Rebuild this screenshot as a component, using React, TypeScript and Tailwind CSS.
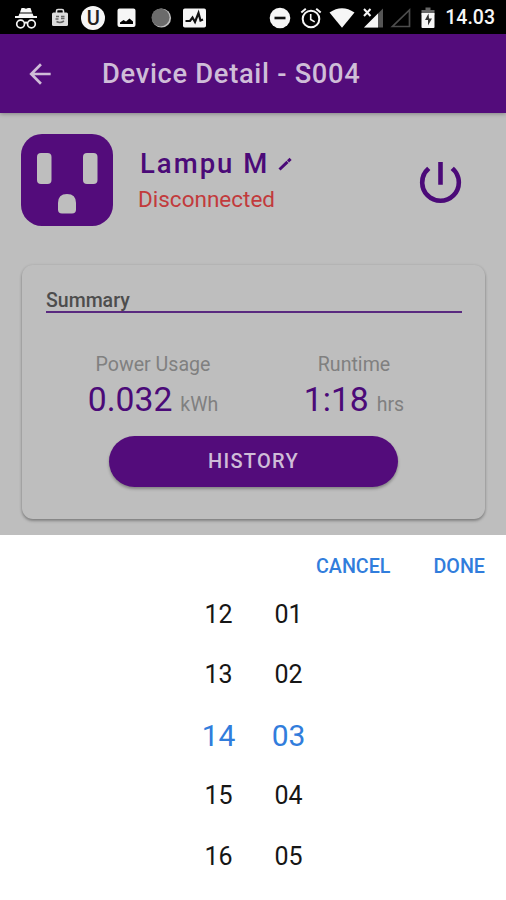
import type { ReactNode } from 'react';
import { MdArrowBack, MdPowerSettingsNew } from 'react-icons/md';

const hours = ['12', '13', '14', '15', '16'];
const minutes = ['01', '02', '03', '04', '05'];

function Glyph({ children, cell = 'w-[33.7px]' }: { children: ReactNode; cell?: string }) {
  return (
    <span className={`flex shrink-0 justify-center ${cell}`}>
      <svg viewBox="0 0 26 26" className="size-[26px] shrink-0" fill="#f6f6f6">
        {children}
      </svg>
    </span>
  );
}

function StatusBar() {
  return (
    <header className="flex h-[34px] items-center justify-between bg-black pt-px pr-[11px] pl-[9px]">
      <div className="flex">
        {/* Incognito */}
        <Glyph>
          <path d="M8.5 3h2.5l2 .8L15 3h2.5l1.5 4.5h-12zM6.5 8.5h13l1 2.5h3.5v2H2v-2h3.5z" />
          <g fill="none" stroke="#f6f6f6" strokeWidth="1.7">
            <circle cx="7.6" cy="19" r="3.9" />
            <circle cx="18.4" cy="19" r="3.9" />
            <path d="M11.3 18.2q1.7-1.4 3.4 0" />
          </g>
        </Glyph>
        {/* Shopping bag */}
        <Glyph>
          <path d="M9.5 8V6q0-1.5 1.5-1.5h4q1.5 0 1.5 1.5v2" fill="none" stroke="#ddd" strokeWidth="1.6" />
          <rect x="5" y="7.5" width="16" height="13.5" rx="1.5" fill="#dcdcdc" />
          <path d="M9 11.5h3M14 11.5h3.500M8.5 14h3M14 13.500h3.500M9.500 16.500q3.500 2 7.500-.5" fill="none" stroke="#666" strokeWidth="1.5" />
        </Glyph>
        <span className="flex w-[33.7px] items-center justify-center">
          <span className="flex size-6 items-center justify-center rounded-full bg-[#f6f6f6] text-[20px] leading-none font-medium text-[#222]">
            U
          </span>
        </span>
        {/* Picture */}
        <Glyph>
          <path
            fillRule="evenodd"
            d="M5.5 3.5h14a2 2 0 0 1 2 2v14.5a2 2 0 0 1-2 2h-14a2 2 0 0 1-2-2v-14.5a2 2 0 0 1 2-2zM6 19h13v-2.500l-3.500-3-3.500 3-2.500-1.500-3.500 2.500z"
          />
        </Glyph>
        {/* Moon */}
        <Glyph>
          <circle cx="13.5" cy="13" r="9.6" fill="#bdbdbd" />
          <circle cx="12.5" cy="12.5" r="9" fill="#6b6b6b" />
        </Glyph>
        {/* Activity */}
        <Glyph>
          <rect x="2" y="3.5" width="23" height="19" rx="1.8" />
          <path d="M4.500 16h4.500l2.500-3.500 2.500 4.500 3.500-9 2 7.500 2.500-1" fill="none" stroke="#111" strokeWidth="2.200" />
        </Glyph>
      </div>

      <div className="flex items-center">
        {/* Do not disturb */}
        <Glyph cell="w-[31px]">
          <circle cx="13" cy="13" r="10.3" />
          <path d="M7.5 11.7h11v2.6h-11z" fill="#111" />
        </Glyph>
        {/* Alarm */}
        <Glyph cell="w-[31px]">
          <g fill="none" stroke="#f6f6f6" strokeWidth="2">
            <circle cx="13" cy="14" r="8.3" />
            <path d="M3.3 7.5l4.5-3.8M22.7 7.5l-4.5-3.8" />
            <path d="M12.7 9v5.5l4 2.4" strokeWidth="1.6" />
          </g>
        </Glyph>
        {/* Wifi */}
        <Glyph cell="w-[32px]">
          <path d="M.5 7.5Q13-1 25.5 7.5L13 22.8z" />
        </Glyph>
        {/* Mobile signal without data */}
        <Glyph cell="w-[30px]">
          <path d="M23 3.5V22.5H4z" fill="#555" />
          <path d="M18 8.5V22.5H4z" />
          <path d="M4 4l6.500 7M10.5 4L4 11" stroke="#f6f6f6" strokeWidth="2" />
        </Glyph>
        {/* Second SIM */}
        <Glyph cell="w-[25px]">
          <path d="M21.5 5V21.5H4.500z" fill="none" stroke="#4d4d4d" strokeWidth="1.7" />
        </Glyph>
        {/* Battery */}
        <Glyph cell="w-[30px]">
          <path d="M10.5 2.5h5v2.5h4v5h-13v-5h4z" fill="#666" />
          <path d="M6.5 8h13v14q0 1-1 1h-11q-1 0-1-1z" />
          <path d="M13.500 8.500l-3.500 6.500h3v5.500l4-7h-3z" fill="#333" />
        </Glyph>
        <span className="ml-[2px] pt-px text-[19.5px] leading-none font-medium text-[#f6f6f6]">14.03</span>
      </div>
    </header>
  );
}

function Outlet() {
  return (
    <svg viewBox="0 0 92 92" className="size-[92px] shrink-0">
      <rect width="92" height="92" rx="21" fill="#530c7b" />
      <g fill="#bebebe">
        <rect x="16" y="19" width="14.5" height="31" rx="4" />
        <rect x="62" y="19" width="14.5" height="31" rx="4" />
        <path d="M37 69q0-9 9-9t9 9v6.5q0 4-4 4H41q-4 0-4-4z" />
      </g>
    </svg>
  );
}

function Stat({ label, value, unit, className }: { label: string; value: string; unit: string; className: string }) {
  return (
    <div className={`flex flex-col items-center ${className}`}>
      <div className="text-[19.6px] leading-6 text-[#808080]">{label}</div>
      <div className="flex items-baseline gap-2 pt-px leading-[44px]">
        <span className="text-[33.7px] text-[#4b0a78]">{value}</span>
        <span className="text-[19.5px] text-[#808080]">{unit}</span>
      </div>
    </div>
  );
}

function PickerColumn({ values }: { values: string[] }) {
  return (
    <div className="flex w-[70px] flex-col items-center">
      {values.map((value, i) => (
        <div
          key={value}
          className={`flex h-[60.5px] items-center ${i === 2 ? 'text-[30px] text-[#317ddc]' : 'text-[25px] text-[#161616]'}`}
        >
          {value}
        </div>
      ))}
    </div>
  );
}

export default function App() {
  return (
    <div className="flex h-[900px] w-[506px] flex-col overflow-hidden bg-[#bebebe] font-['Roboto',sans-serif]">
      <StatusBar />

      <nav className="relative flex h-[79px] items-center bg-[#530c7b] pl-6 shadow-[0_1px_4px_rgba(0,0,0,0.3)]">
        <MdArrowBack className="size-8 text-[#cfbdd8]" />
        <h1 className="ml-[46px] pt-0.5 text-[27.3px] font-medium tracking-[0.7px] text-[#cfbdd8]">
          Device Detail - S004
        </h1>
      </nav>

      <section className="flex h-[152px] items-start pt-[21px] pl-[21px]">
        <Outlet />
        <div className="ml-[25px] flex-1 pt-3">
          <div className="flex items-center gap-[9px] pl-0.5">
            <h2 className="text-[27.5px] leading-9 font-medium tracking-[2px] whitespace-nowrap text-[#4b0a78]">
              Lampu M
            </h2>
            <svg viewBox="0 0 14 14" className="size-3.5" fill="none" stroke="#4b0a78" strokeWidth="3">
              <path d="M1.500 12.500L9.5 4.9M10 4.400L12.6 1.9" />
            </svg>
          </div>
          <div className="-mt-px text-[22.5px] leading-9 text-[#c23a3c]">Disconnected</div>
        </div>
        <MdPowerSettingsNew className="mt-[21px] mr-[38px] size-[55px] text-[#4b0a78]" />
      </section>

      <section className="mr-[21px] ml-[22px] h-[254px] shrink-0 rounded-[11px] shadow-[0_2px_3px_rgba(0,0,0,0.3),0_0_3px_rgba(0,0,0,0.1)]">
        <div className="mr-[23px] ml-6 h-12 border-b-2 border-[#5a2a80] pt-[23px] text-[19.5px] leading-[25px] font-medium text-[#4d4d4d]">
          Summary
        </div>
        <div className="flex pt-10">
          <Stat label="Power Usage" value="0.032" unit="kWh" className="ml-[56px] w-[150px]" />
          <Stat label="Runtime" value="1:18" unit="hrs" className="ml-[51px] w-[150px]" />
        </div>
        <button className="mx-auto mt-[9px] flex h-[51px] w-[289px] items-center justify-center rounded-full bg-[#530c7b] pb-0.5 text-[20px] font-medium tracking-[1.3px] text-[#cfbdd8] shadow-[0_2px_3px_rgba(0,0,0,0.3)]">
          HISTORY
        </button>
      </section>

      <section className="mt-4 flex-1 bg-white">
        <div className="flex h-[49px] items-start justify-end gap-[43px] pt-[19px] pr-[21px] text-[19.7px] leading-[26px] font-medium text-[#317ddc]">
          <button>CANCEL</button>
          <button>DONE</button>
        </div>
        <div className="flex justify-center pl-px">
          <PickerColumn values={hours} />
          <PickerColumn values={minutes} />
        </div>
      </section>
    </div>
  );
}
